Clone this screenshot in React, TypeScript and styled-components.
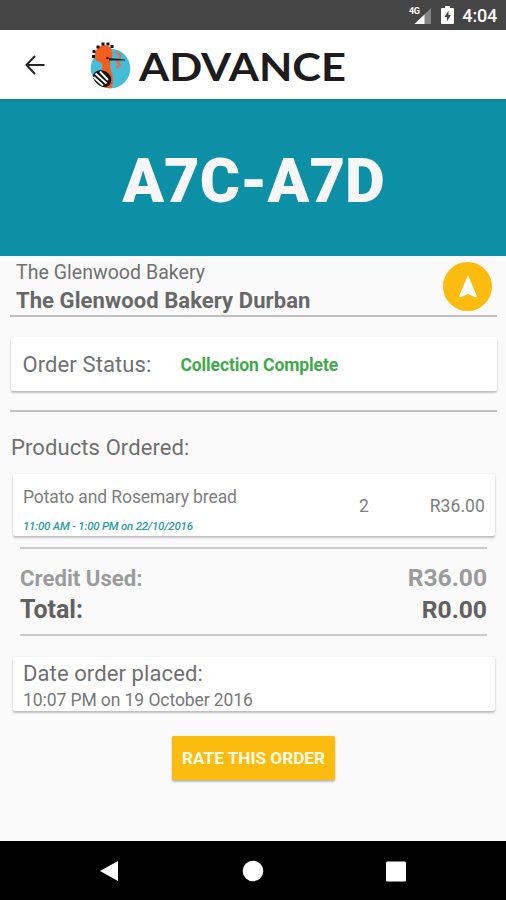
import React from "react";
import styled, { createGlobalStyle } from "styled-components";

const GlobalStyle = createGlobalStyle`
  * { box-sizing: border-box; }
  body { margin: 0; background: #fafafa; font-family: Roboto, sans-serif; color: #707070; }
`;

const Screen = styled.div`
  display: flex;
  flex-direction: column;
  width: 506px;
  height: 900px;
  background: #fafafa;
  overflow: hidden;
`;

const StatusBar = styled.header`
  display: flex;
  align-items: center;
  justify-content: flex-end;
  height: 30px;
  padding: 2px 9px 0 0;
  background: #454545;
  color: #fff;
`;

const SignalIcon = styled.svg`
  width: 24px;
  height: 22px;
  margin-right: 9px;
`;

const BatteryIcon = styled.svg`
  width: 13px;
  height: 20px;
  margin-right: 8px;
`;

const Clock = styled.span`
  font-size: 18px;
  line-height: 22px;
  font-weight: 500;
  letter-spacing: -0.2px;
`;

const AppBar = styled.div`
  display: flex;
  align-items: center;
  height: 69px;
  padding-left: 24px;
  background: #fff;
`;

const BackIcon = styled.svg`
  width: 22px;
  height: 22px;
  margin-right: 42px;
`;

const Bird = styled.svg`
  width: 44px;
  height: 50px;
`;

const Wordmark = styled.svg`
  width: 226px;
  height: 60px;
  margin: 4px 0 0 3px;
  overflow: visible;
  font-family: Lato, sans-serif;
  font-weight: 700;
  font-size: 38px;
  fill: #1d1b1c;
`;

const Banner = styled.section`
  display: flex;
  align-items: center;
  justify-content: center;
  height: 157px;
  padding: 6px 0 0 1px;
  background: linear-gradient(#0b8298, #0d8fa6 4px);
  color: #f6f6f6;
  font-size: 61.4px;
  font-weight: 900;
  line-height: 70px;
`;

const Content = styled.main`
  display: flex;
  flex-direction: column;
  flex: 1;
  padding: 3px 10px 0;
`;

const StoreRow = styled.section`
  display: flex;
  justify-content: space-between;
  padding: 1px 4px 0 6px;
  height: 56px;
`;

const StoreNames = styled.div`
  display: flex;
  flex-direction: column;
  gap: 2px;
  padding-top: 1px;
`;

const StoreGroup = styled.div`
  font-size: 19.5px;
  line-height: 24px;
  letter-spacing: 0.04px;
`;

const StoreBranch = styled.div`
  font-size: 22px;
  line-height: 28px;
  font-weight: 700;
  letter-spacing: 0.08px;
  color: #686868;
`;

const NavigateButton = styled.button`
  display: flex;
  align-items: center;
  justify-content: center;
  width: 49px;
  height: 49px;
  margin-top: 2px;
  padding: 0 0 1px;
  border: 0;
  border-radius: 50%;
  background: #fcbc0f;
`;

const Rule = styled.hr<{ $inset?: boolean }>`
  width: ${(p) => (p.$inset ? "467px" : "487px")};
  height: 2px;
  margin: ${(p) => (p.$inset ? "0 10px" : "0")};
  border: 0;
  background: ${(p) => (p.$inset ? "#c9cbcb" : "#bfbfbf")};
`;

const Card = styled.section<{ $narrow?: boolean }>`
  display: flex;
  margin: ${(p) => (p.$narrow ? "0 1px 0 3px" : "0 -1px 0 0.5px")};
  border-radius: 2px;
  background: #fff;
  box-shadow: 0 2px 2px rgba(0, 0, 0, 0.22), 0 0 2px rgba(0, 0, 0, 0.1);
`;

const StatusCard = styled(Card)`
  align-items: center;
  gap: 29px;
  height: 54px;
  margin-top: 20px;
  margin-bottom: 19px;
  padding: 2px 0 0 12px;
`;

const Label = styled.div`
  font-size: 22px;
  line-height: 28px;
  letter-spacing: 0.1px;
  color: #707070;
`;

const StatusValue = styled.div`
  font-size: 17.5px;
  line-height: 24px;
  font-weight: 700;
  letter-spacing: -0.1px;
  color: #3eab48;
`;

const SectionTitle = styled(Label)`
  margin: 22px 0 12px 1px;
`;

const ProductCard = styled(Card)`
  height: 62px;
  padding: 11px 10px 0 10px;
  color: #7e7e7e;
  font-size: 17.5px;
  line-height: 24px;
  margin-bottom: 11px;
`;

const ProductInfo = styled.div`
  width: 336px;
  letter-spacing: -0.1px;
`;

const PickupSlot = styled.div`
  margin-top: 9px;
  font-size: 11.5px;
  line-height: 16px;
  font-style: italic;
  font-weight: 500;
  letter-spacing: -0.23px;
  color: #2b9ca6;
`;

const Quantity = styled.div`
  padding-top: 9px;
`;

const Price = styled.div`
  margin-left: auto;
  padding-top: 9px;
  letter-spacing: 0.1px;
`;

const TotalRow = styled.div<{ $muted?: boolean }>`
  display: flex;
  justify-content: space-between;
  margin: 0 9px 0 10px;
  font-size: 24.6px;
  line-height: 32px;
  font-weight: 700;
  color: ${(p) => (p.$muted ? "#9b9b9b" : "#606060")};
`;

const TotalLabel = styled.span<{ $small?: boolean }>`
  font-size: ${(p) => (p.$small ? "22.2px" : "25px")};
`;

const Totals = styled.section`
  padding: 13px 0 8px;
`;

const DateCard = styled(Card)`
  flex-direction: column;
  height: 54px;
  margin-top: 21px;
  padding: 3px 0 0 10px;
`;

const DateValue = styled.div`
  font-size: 17.5px;
  line-height: 24px;
  letter-spacing: -0.08px;
  color: #787878;
`;

const RateButton = styled.button`
  align-self: center;
  width: 163px;
  height: 44px;
  margin: 25px 0 0 1px;
  padding: 0;
  border: 0;
  border-radius: 2px;
  background: #fcbc0f;
  box-shadow: 0 2px 2px rgba(0, 0, 0, 0.24), 0 0 2px rgba(0, 0, 0, 0.12);
  color: #fffbe8;
  font: 700 17.2px/24px Roboto, sans-serif;
  white-space: nowrap;
`;

const NavBar = styled.nav`
  display: flex;
  align-items: center;
  justify-content: center;
  gap: 121px;
  height: 59px;
  background: #000;
`;

const NavIcon = styled.svg`
  width: 22px;
  height: 22px;
  fill: #fff;
`;

function HoopoeLogo() {
  return (
    <Bird viewBox="0 0 44 50">
      <circle cx="22.500" cy="28.500" r="19.800" fill="#45bdd6" />
      <path d="M7 18C6 11 10 6 16 5C22 5 25 9 24.500 15C24.500 18 22 20 22 24C22 31 25 34 25 40C25 44 24 46 23 48.500L14 47L13 31C15 28 15 24 12 22C9 21 7 20 7 18Z" fill="#f45d20" />
      <g fill="#151313">
        <rect x="4" y="15" width="3" height="3" />
        <rect x="4.500" y="10" width="3" height="3" />
        <rect x="8.500" y="5.500" width="3" height="3" />
        <rect x="13.500" y="2.500" width="3" height="3" />
        <rect x="18.500" y="2.500" width="3" height="3" />
        <rect x="22.500" y="5" width="3" height="3" />
      </g>
      <path d="M28 12Q34 15 31 19Q27 22 30 23Q34 24 28 28" fill="none" stroke="#e86a48" strokeWidth="2.400" />
      <path d="M21 18L37 19.500V20.500L21 20.500Z" fill="#272125" />
      <circle cx="19.500" cy="18" r="1.300" fill="#33211f" />
      <path d="M5 37C5 32 10 29.500 15 30.500C21 32 24.500 37 23 42C22 46 19 47.500 15 47C11 46 6 42 5 37Z" fill="#171717" />
      <path d="M5.500 37L15 45.500M7.500 33.500L18.500 43.500M12 31.500L20 40" stroke="#fff" strokeWidth="1.900" />
    </Bird>
  );
}

export default function App() {
  return (
    <>
      <GlobalStyle />
      <Screen>
        <StatusBar>
          <SignalIcon viewBox="0 0 24 22">
            <path d="M23 3V19H6.500Z" fill="#858585" />
            <path d="M16.500 9.500V19H6.500Z" fill="#fff" />
            <text x="1" y="9" fontSize="9" fontWeight="700" fill="#fff" textLength="11">4G</text>
          </SignalIcon>
          <BatteryIcon viewBox="0 0 13 20">
            <path d="M4 0H9V2H12Q13 2 13 3V17Q13 18 12 18H1Q0 18 0 17V3Q0 2 1 2H4Z" fill="#fff" />
            <path d="M7.500 4.500L3.500 11H6V15.500L9.800 9H7.500Z" fill="#454545" />
          </BatteryIcon>
          <Clock>4:04</Clock>
        </StatusBar>
        <AppBar>
          <BackIcon viewBox="0 0 22 22">
            <path d="M20.500 11H3M11 2L2.500 11L11 20" fill="none" stroke="#222" strokeWidth="2" />
          </BackIcon>
          <HoopoeLogo />
          <Wordmark viewBox="0 0 226 60">
            <text x="4" y="44" textLength="207" lengthAdjust="spacingAndGlyphs">ADVANCE</text>
          </Wordmark>
        </AppBar>
        <Banner>A7C-A7D</Banner>
        <Content>
          <StoreRow>
            <StoreNames>
              <StoreGroup>The Glenwood Bakery</StoreGroup>
              <StoreBranch>The Glenwood Bakery Durban</StoreBranch>
            </StoreNames>
            <NavigateButton aria-label="Navigate">
              <svg width="20" height="24" viewBox="0 0 20 24">
                <path d="M10 1L19 22.500L18 23.500L10 20L2 23.500L1 22.500Z" fill="#fff" />
              </svg>
            </NavigateButton>
          </StoreRow>
          <Rule />
          <StatusCard>
            <Label>Order Status:</Label>
            <StatusValue>Collection Complete</StatusValue>
          </StatusCard>
          <Rule />
          <SectionTitle>Products Ordered:</SectionTitle>
          <ProductCard $narrow>
            <ProductInfo>
              Potato and Rosemary bread
              <PickupSlot>11:00 AM - 1:00 PM on 22/10/2016</PickupSlot>
            </ProductInfo>
            <Quantity>2</Quantity>
            <Price>R36.00</Price>
          </ProductCard>
          <Rule $inset />
          <Totals>
            <TotalRow $muted>
              <TotalLabel $small>Credit Used:</TotalLabel>
              <span>R36.00</span>
            </TotalRow>
            <TotalRow>
              <TotalLabel>Total:</TotalLabel>
              <span>R0.00</span>
            </TotalRow>
          </Totals>
          <Rule $inset />
          <DateCard $narrow>
            <Label>Date order placed:</Label>
            <DateValue>10:07 PM on 19 October 2016</DateValue>
          </DateCard>
          <RateButton>RATE THIS ORDER</RateButton>
        </Content>
        <NavBar>
          <NavIcon viewBox="0 0 22 22"><path d="M19 1V21L1 11Z" /></NavIcon>
          <NavIcon viewBox="0 0 22 22"><circle cx="11" cy="11" r="10.300" /></NavIcon>
          <NavIcon viewBox="0 0 22 22"><rect x="1" y="1.500" width="20" height="20" rx="1.500" /></NavIcon>
        </NavBar>
      </Screen>
    </>
  );
}
